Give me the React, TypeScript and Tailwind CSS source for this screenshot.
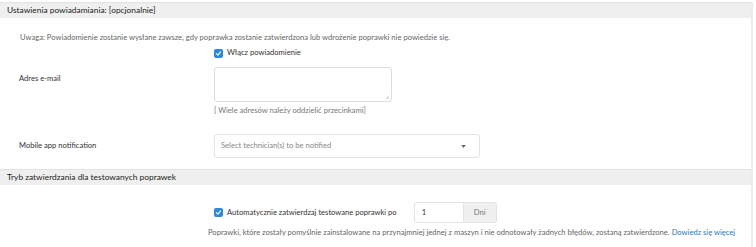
import React from "react";

function Check() {
  return (
    <span className="flex h-[9px] w-[9px] shrink-0 items-center justify-center rounded-[2px] bg-[#2a8ae0]">
      <svg viewBox="0 0 10 10" className="h-[7px] w-[7px]">
        <path d="M2 5.2 L4.2 7.3 L8 2.8" fill="none" stroke="white" strokeWidth="1.6" strokeLinecap="round" strokeLinejoin="round" />
      </svg>
    </span>
  );
}

function SectionHeader({ title }: { title: string }) {
  return (
    <div className="flex h-[16px] items-center border-t border-[#e2e2e2] bg-[#efefef] pl-[7px] text-[8.4px] text-[#222]">
      {title}
    </div>
  );
}

export default function App() {
  return (
    <div className="h-[247px] w-[756px] bg-white pt-[2px] font-['Lato',sans-serif]">
      <div className="h-[245px] w-[753px] border-r-2 border-[#ececec]">
        <SectionHeader title="Ustawienia powiadamiania: [opcjonalnie]" />

        <div className="whitespace-nowrap pl-[20px] pt-[13px] text-[7.6px] leading-[12px] text-[#666]">
          Uwaga: Powiadomienie zostanie wysłane zawsze, gdy poprawka zostanie zatwierdzona lub wdrożenie poprawki nie powiedzie się.
        </div>

        <div className="mt-[4px] flex h-[12px] items-center gap-[4px] pl-[214px] text-[7.6px] text-[#333]">
          <Check />
          <span>Włącz powiadomienie</span>
        </div>

        <div className="mt-[8px] flex">
          <div className="w-[214px] pl-[19px] pt-[6px] text-[7.6px] leading-[10px] text-[#333]">Adres e-mail</div>
          <div>
            <div className="relative h-[35px] w-[178px] rounded-[3px] border border-[#ddd] bg-white">
              <svg viewBox="0 0 6 6" className="absolute bottom-[1px] right-[1px] h-[5px] w-[5px]">
                <path d="M1 5 L5 1 M3 5 L5 3" stroke="#aaa" strokeWidth="0.7" />
              </svg>
            </div>
            <div className="mt-[2px] text-[7.6px] leading-[12px] text-[#777]">[ Wiele adresów należy oddzielić przecinkami]</div>
          </div>
        </div>

        <div className="mt-[18px] flex items-center">
          <div className="w-[214px] pl-[19px] text-[7.6px] text-[#333]">Mobile app notification</div>
          <div className="flex h-[24px] w-[266px] items-center justify-between rounded-[3px] border border-[#e3e3e3] bg-white pl-[6px] pr-[13px] text-[7.6px] text-[#888]">
            <span>Select technician(s) to be notified</span>
            <svg viewBox="0 0 6 4" className="h-[3px] w-[5px]">
              <path d="M0 0 L6 0 L3 4 Z" fill="#666" />
            </svg>
          </div>
        </div>

        <div className="mt-[11px]">
          <SectionHeader title="Tryb zatwierdzania dla testowanych poprawek" />
        </div>

        <div className="mt-[17px] flex items-center pl-[214px]">
          <Check />
          <span className="ml-[4px] text-[7.6px] text-[#333]">Automatycznie zatwierdzaj testowane poprawki po</span>
          <div className="ml-[17px] flex h-[21px] text-[7.6px]">
            <div className="flex w-[50px] items-center rounded-l-[3px] border border-[#e3e3e3] pl-[7px] text-[#333]">1</div>
            <div className="flex w-[33px] items-center justify-center rounded-r-[3px] border border-l-0 border-[#e3e3e3] bg-[#f0f0f0] text-[#777]">Dni</div>
          </div>
        </div>

        <div className="mt-[3px] whitespace-nowrap pl-[208px] text-[7.6px] leading-[12px] text-[#666]">
          Poprawki, które zostały pomyślnie zainstalowane na przynajmniej jednej z maszyn i nie odnotowały żadnych błędów, zostaną zatwierdzone.{" "}
          <span className="text-[#1a7ac8]">Dowiedz się więcej</span>
        </div>
      </div>
    </div>
  );
}
